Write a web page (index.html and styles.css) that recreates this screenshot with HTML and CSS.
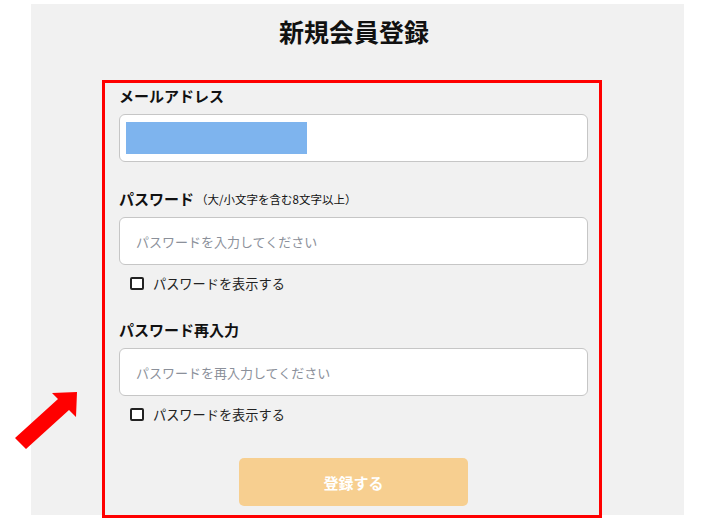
FILE: index.html
```html
<!DOCTYPE html>
<html lang="ja">
<head>
<meta charset="utf-8">
<title>新規会員登録</title>
<link rel="stylesheet" href="styles.css">
</head>
<body>
<div class="page">
  <h1 class="title">新規会員登録</h1>
  <form class="form">
    <div class="label">メールアドレス</div>
    <div class="input"><span class="autofill"></span></div>

    <div class="label label-gap">パスワード<span class="note">（大/小文字を含む8文字以上）</span></div>
    <div class="input"><span class="placeholder">パスワードを入力してください</span></div>
    <label class="check"><span class="box"></span><span>パスワードを表示する</span></label>

    <div class="label label-gap">パスワード再入力</div>
    <div class="input"><span class="placeholder">パスワードを再入力してください</span></div>
    <label class="check"><span class="box"></span><span>パスワードを表示する</span></label>

    <div class="actions"><button type="button" class="submit">登録する</button></div>
  </form>
</div>
<svg class="arrow" width="90" height="70" viewBox="0 380 90 70">
  <polygon points="77,392 76,417 69,410 26,449 15,438 58,399 52,393" fill="#ff0000"/>
</svg>
</body>
</html>
```

FILE: styles.css
```css
html, body {
  margin: 0;
  padding: 0;
  background: #ffffff;
}
body {
  font-family: "Noto Sans CJK JP", "Noto Sans", sans-serif;
  color: #111;
  min-height: 526px;
  overflow: hidden;
}
.page {
  margin: 4px 0 0 31px;
  width: 653px;
  height: 511px;
  background: #f1f1f1;
  padding: 10px 0 0 71px;
  box-sizing: border-box;
}
.title {
  width: 504px;
  margin: 0 0 32px 0;
  font-size: 25px;
  line-height: 34px;
  font-weight: 700;
  text-align: center;
  color: #111;
}
.form {
  width: 500px;
  box-sizing: border-box;
  border: 3px solid #ff0000;
  padding: 3px 11px 0 14px;
  height: 438px;
  margin: 0;
  display: flex;
  flex-direction: column;
}
.label {
  font-size: 15px;
  font-weight: 700;
  line-height: 20px;
  height: 20px;
  display: flex;
  align-items: center;
  flex-shrink: 0;
}
.label-gap {
  margin-top: 27px;
}
.note {
  font-size: 11.5px;
  font-weight: 400;
  margin-left: 2px;
}
.input {
  margin-top: 8px;
  height: 48px;
  box-sizing: border-box;
  background: #fff;
  border: 1px solid #c6c6c6;
  border-radius: 6px;
  display: flex;
  align-items: center;
  padding-left: 16px;
  flex-shrink: 0;
}
.autofill {
  display: block;
  width: 181px;
  height: 32px;
  margin-left: -10px;
  background: #7eb4ee;
}
.placeholder {
  font-size: 13px;
  color: #8b909a;
}
.check {
  margin-top: 8px;
  height: 20px;
  display: flex;
  align-items: center;
  padding-left: 11px;
  font-size: 13.2px;
  color: #222;
  flex-shrink: 0;
}
.box {
  width: 14px;
  height: 13px;
  box-sizing: border-box;
  border: 2px solid #222;
  border-radius: 2px;
  background: #fff;
  margin-right: 9px;
}
.actions {
  margin-top: 34px;
  display: flex;
  justify-content: center;
  flex-shrink: 0;
}
.submit {
  width: 229px;
  height: 48px;
  border: none;
  border-radius: 5px;
  background: #f7cf90;
  color: #fff;
  font-family: "Noto Sans CJK JP", "Noto Sans", sans-serif;
  font-size: 15px;
  font-weight: 700;
}
.arrow {
  position: absolute;
  left: 0;
  top: 380px;
}
```
